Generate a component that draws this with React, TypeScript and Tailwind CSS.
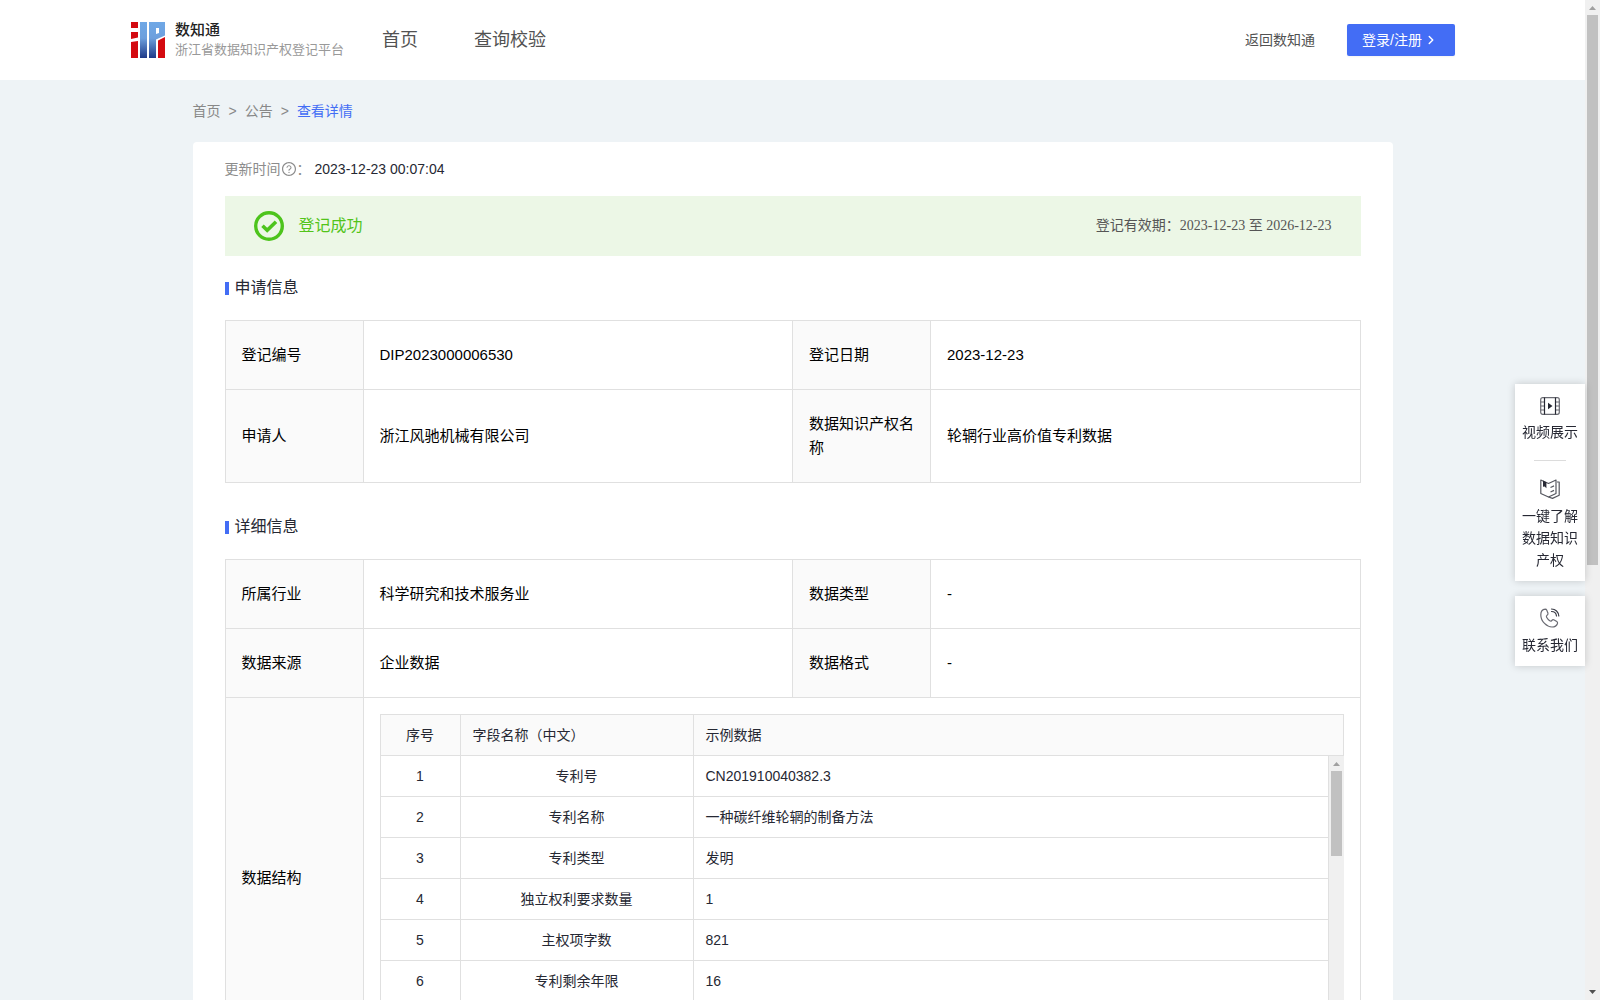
import React from "react";
import clsx from "clsx";
import { ChevronRight } from "lucide-react";
import { AiOutlineQuestionCircle } from "react-icons/ai";

interface Field {
  name: string;
  sample: string;
}

const fields: Field[] = [
  { name: "专利号", sample: "CN201910040382.3" },
  { name: "专利名称", sample: "一种碳纤维轮辋的制备方法" },
  { name: "专利类型", sample: "发明" },
  { name: "独立权利要求数量", sample: "1" },
  { name: "主权项字数", sample: "821" },
  { name: "专利剩余年限", sample: "16" },
];

const Logo: React.FC = () => (
  <svg width="34" height="36" viewBox="0 0 34 36" aria-hidden="true">
    <defs>
      <linearGradient id="logoBlue" x1="0" y1="0" x2="0" y2="1">
        <stop offset="0" stopColor="#6fa8e6" />
        <stop offset="0.45" stopColor="#6d9fdd" />
        <stop offset="1" stopColor="#1f3a88" />
      </linearGradient>
    </defs>
    <path fill="#d40a10" d="M0 0h7v6H0zM0 10h7v5.500L0 17zM0 20l7-1v17H0zM27 18.500l7-3.500v21h-7z" />
    <path
      fill="url(#logoBlue)"
      fillRule="evenodd"
      d="M9 0h7v36H9zM18 0h16v13.500l-9 4V36h-7zM25 6v6l3-1V6z"
    />
  </svg>
);

const SuccessIcon: React.FC = () => (
  <svg width="30" height="30" viewBox="0 0 30 30" fill="none" stroke="#4dc41c" aria-hidden="true">
    <circle cx="15" cy="15" r="13.300" strokeWidth="3.400" />
    <path d="M8.500 14.800l4.700 4.500L22 10.800" strokeWidth="3.600" />
  </svg>
);

const VideoIcon: React.FC = () => (
  <svg width="20" height="18" viewBox="0 0 20 18" fill="none" stroke="#6a6b73" strokeWidth="1.200" aria-hidden="true">
    <rect x="0.700" y="0.700" width="18.600" height="16.600" rx="2" />
    <path d="M0.600 5H4M0.600 9H4M0.600 13H4M16 5h3.400M16 9h3.400M16 13h3.400" />
    <path d="M4.500 0.600v16.800M15.500 0.600v16.800" stroke="#262833" />
    <path d="M8 5.800l4.500 3.200L8 12.200z" fill="#262833" stroke="none" />
  </svg>
);

const BookIcon: React.FC = () => (
  <svg
    width="20"
    height="20"
    viewBox="0 0 20 20"
    fill="none"
    stroke="#55575f"
    strokeWidth="1.200"
    strokeLinejoin="round"
    aria-hidden="true"
  >
    <path d="M0.800 1L8.500 4.500 16 1v13.500L8.500 18 0.800 14.500z" />
    <path d="M17 3h2.200v13.200L12.500 19.400 8.500 18" />
    <path d="M10.500 8.500l3.500-1.600M10.500 13l3.500-1.600" />
    <path d="M3 1.500l3.400 1.700v6L4.700 7.600 3 7.800z" fill="#262833" stroke="none" />
  </svg>
);

const PhoneIcon: React.FC = () => (
  <svg
    width="20"
    height="20"
    viewBox="0 0 20 20"
    fill="none"
    stroke="#6a6b73"
    strokeWidth="1.200"
    strokeLinecap="round"
    strokeLinejoin="round"
    aria-hidden="true"
  >
    <path d="M5.200 1.200C2.600 1.400.8 3.800.8 7c0 6.500 6.200 12 11.200 12 2.800 0 4.800-1.500 5.500-3.500.2-.8 0-1.500-.7-2l-2.600-1.600c-.9-.5-1.700-.3-2.300.5-.5.8-1.300.9-2.200.3-1.500-1-2.300-1.900-3.100-3.400-.5-.9-.2-1.500.5-2 .9-.6 1.200-1.300.8-2.200L6.800 2.200c-.3-.7-.8-1-1.600-1z" />
    <path d="M11.500 1c4 0 7 3 7.300 7M11.500 3.500c2.700 0 4.700 1.800 5 4.500" stroke="#3a3c46" />
  </svg>
);

interface ScrollbarProps {
  thumbClass: string;
}

const Scrollbar: React.FC<ScrollbarProps> = ({ thumbClass }) => (
  <div className="flex w-[15px] shrink-0 flex-col items-center bg-[#f0f0f0]" aria-hidden="true">
    <svg width="15" height="15" viewBox="0 0 15 15" className="shrink-0">
      <path d="M4 10h7L7.500 6z" fill="#a0a0a0" />
    </svg>
    <div className={clsx("w-[11px] bg-[#c1c1c1]", thumbClass)} />
    <svg width="15" height="15" viewBox="0 0 15 15" className="mt-auto shrink-0">
      <path d="M4 5h7L7.500 9z" fill="#505050" />
    </svg>
  </div>
);

const Header: React.FC = () => (
  <header className="flex h-20 items-center bg-white pr-[130px] pl-[131px] text-[#525252]">
    <a href="#" className="flex items-center gap-2.5">
      <Logo />
      <span className="flex flex-col">
        <span className="text-[15px] leading-5 font-medium text-[#222]">数知通</span>
        <span className="text-[13px] leading-5 text-[#999]">浙江省数据知识产权登记平台</span>
      </span>
    </a>
    <nav className="ml-[38px] flex gap-14 text-lg">
      <a href="#">首页</a>
      <a href="#">查询校验</a>
    </nav>
    <div className="ml-auto flex items-center gap-8 text-sm">
      <a href="#">返回数知通</a>
      <button
        type="button"
        className="flex h-8 w-[108px] items-center gap-0.5 rounded-xs bg-[#436df5] pl-[15px] text-white shadow-xs"
      >
        登录/注册
        <ChevronRight size={14} strokeWidth={2.5} />
      </button>
    </div>
  </header>
);

const SectionTitle: React.FC<{ children: React.ReactNode }> = ({ children }) => (
  <h2 className="flex h-6 items-center gap-1.5 text-base text-[#262833]">
    <span className="mt-px h-[13px] w-1 bg-[#436df5]" />
    {children}
  </h2>
);

const Label: React.FC<{ children: React.ReactNode }> = ({ children }) => (
  <th scope="row" className="border border-[#e0e0e0] bg-[#fafafa] px-4 py-[22px] text-left font-normal">
    {children}
  </th>
);

const Value: React.FC<{ children: React.ReactNode }> = ({ children }) => (
  <td className="border border-[#e0e0e0] px-4 py-[22px]">{children}</td>
);

const InfoTable: React.FC<{ children: React.ReactNode }> = ({ children }) => (
  <table className="mt-5 w-full table-fixed border-collapse text-[15px] leading-6 text-black">
    <colgroup>
      <col className="w-[138px]" />
      <col />
      <col className="w-[138px]" />
      <col />
    </colgroup>
    <tbody>{children}</tbody>
  </table>
);

const FieldTable: React.FC = () => (
  <div className="text-sm text-[#262833]">
    <table className="w-full table-fixed border-collapse bg-[#fafafa]">
      <thead>
        <tr className="h-[41px]">
          <th className="w-20 border border-[#e0e0e0] font-normal">序号</th>
          <th className="w-[233px] border border-[#e0e0e0] px-3 text-left font-normal">字段名称（中文）</th>
          <th className="border border-[#e0e0e0] px-3 text-left font-normal">示例数据</th>
        </tr>
      </thead>
    </table>
    <div className="flex h-[286px] overflow-hidden">
      <table className="h-fit min-w-0 flex-1 table-fixed border-separate border-spacing-0 border-l border-[#e0e0e0]">
        <colgroup>
          <col className="w-20" />
          <col className="w-[233px]" />
          <col />
        </colgroup>
        <tbody>
          {fields.map((field, i) => (
            <tr key={field.name} className="h-[41px]">
              <td className="border-r border-b border-[#e0e0e0] text-center">{i + 1}</td>
              <td className="border-r border-b border-[#e0e0e0] text-center">{field.name}</td>
              <td className="border-r border-b border-[#e0e0e0] px-3">{field.sample}</td>
            </tr>
          ))}
        </tbody>
      </table>
      <Scrollbar thumbClass="h-[85px]" />
    </div>
  </div>
);

const SideButton: React.FC<{ icon: React.ReactNode; children: React.ReactNode }> = ({ icon, children }) => (
  <button type="button" className="flex w-full flex-col items-center gap-1.5 px-1.5 text-sm leading-[22px] text-[#262833]">
    {icon}
    <span>{children}</span>
  </button>
);

const SidePanel: React.FC = () => (
  <aside className="fixed top-96 right-[15px] flex w-[70px] flex-col gap-[15px]">
    <div className="flex flex-col items-center bg-white pt-[13px] pb-2.5 shadow-[0_0_8px_rgba(0,0,0,0.18)]">
      <SideButton icon={<VideoIcon />}>视频展示</SideButton>
      <div className="mt-[17px] mb-[18px] h-px w-8 bg-[#dcdcdc]" />
      <SideButton icon={<BookIcon />}>一键了解数据知识产权</SideButton>
    </div>
    <div className="bg-white pt-3 pb-2.5 shadow-[0_0_8px_rgba(0,0,0,0.18)]">
      <SideButton icon={<PhoneIcon />}>联系我们</SideButton>
    </div>
  </aside>
);

const App: React.FC = () => (
  <div className="flex h-screen overflow-hidden bg-[#eef3f6] font-['Liberation_Sans','Noto_Sans_CJK_SC',sans-serif]">
    <div className="min-w-0 flex-1 overflow-y-auto">
      <Header />
      <div className="mx-auto max-w-[1200px]">
        <nav className="flex h-[62px] items-center gap-2 text-sm text-[#888]">
          <a href="#">首页</a>
          <span>&gt;</span>
          <a href="#">公告</a>
          <span>&gt;</span>
          <a href="#" className="text-[#436df5]">
            查看详情
          </a>
        </nav>
        <main className="rounded-t bg-white px-8 pt-4 pb-8">
          <p className="flex h-[22px] items-center text-sm text-[#262833]">
            <span className="flex items-center text-[#8c8c8c]">
              更新时间
              <AiOutlineQuestionCircle size={16} />：
            </span>
            <span className="ml-1">2023-12-23 00:07:04</span>
          </p>
          <div className="mt-4 flex h-[60px] items-center bg-[#ecf7e6] px-[29px]">
            <SuccessIcon />
            <span className="ml-[15px] text-base text-[#52c41a]">登记成功</span>
            <span className="ml-auto font-['Liberation_Serif','Noto_Sans_CJK_SC',serif] text-sm text-[#555]">
              登记有效期：2023-12-23 至 2026-12-23
            </span>
          </div>

          <div className="mt-5">
            <SectionTitle>申请信息</SectionTitle>
            <InfoTable>
              <tr>
                <Label>登记编号</Label>
                <Value>DIP2023000006530</Value>
                <Label>登记日期</Label>
                <Value>2023-12-23</Value>
              </tr>
              <tr>
                <Label>申请人</Label>
                <Value>浙江风驰机械有限公司</Value>
                <Label>数据知识产权名称</Label>
                <Value>轮辋行业高价值专利数据</Value>
              </tr>
            </InfoTable>
          </div>

          <div className="mt-8">
            <SectionTitle>详细信息</SectionTitle>
            <InfoTable>
              <tr>
                <Label>所属行业</Label>
                <Value>科学研究和技术服务业</Value>
                <Label>数据类型</Label>
                <Value>-</Value>
              </tr>
              <tr>
                <Label>数据来源</Label>
                <Value>企业数据</Value>
                <Label>数据格式</Label>
                <Value>-</Value>
              </tr>
              <tr>
                <Label>数据结构</Label>
                <td colSpan={3} className="border border-[#e0e0e0] p-4">
                  <FieldTable />
                </td>
              </tr>
            </InfoTable>
          </div>
        </main>
      </div>
      <SidePanel />
    </div>
    <Scrollbar thumbClass="h-[55%]" />
  </div>
);

export default App;
